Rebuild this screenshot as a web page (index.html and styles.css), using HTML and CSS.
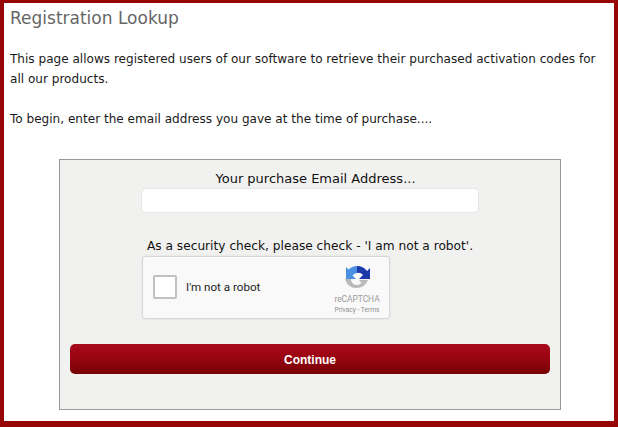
FILE: index.html
```html
<!DOCTYPE html>
<html lang="en">

<head>
    <meta charset="UTF-8">
    <title>Registration Lookup</title>
    <link rel="stylesheet" href="styles.css">
</head>

<body>
    <div class="page">
        <h1 class="title">Registration Lookup</h1>
        <p class="intro">This page allows registered users of our software to retrieve their purchased activation codes for all our products.</p>
        <p class="intro intro-last">To begin, enter the email address you gave at the time of purchase....</p>

        <form class="panel">
            <label class="label label-email" for="email">Your purchase Email Address...</label>
            <input class="email" id="email" type="text">
            <div class="label label-check">As a security check, please check - 'I am not a robot'.</div>
            <div class="captcha">
                <span class="captcha-box"></span>
                <span class="captcha-text">I'm not a robot</span>
                <div class="captcha-logo">
                    <svg class="captcha-icon" viewBox="0 0 26 26" width="26" height="26">
                        <path fill="#b9b9b9" d="M1 13 H7 A6 6 0 0 0 17.5 17 L15 14 H24 A12 12 0 0 1 1 13 Z"/>
                        <path fill="#4a90e2" d="M13 0 A13 13 0 0 0 4.5 3.5 L2 1 V13 H12 L8.5 9.5 A6 6 0 0 1 13 7 Z"/>
                        <path fill="#1c3aa9" d="M13 0 A13 13 0 0 1 23 5 L26 2 V13 H15 L19 9 A6 6 0 0 0 13 7 Z"/>
                    </svg>
                    <div class="captcha-name">reCAPTCHA</div>
                    <div class="captcha-links">Privacy - Terms</div>
                </div>
            </div>
            <button class="continue" type="button">Continue</button>
        </form>
    </div>
</body>

</html>
```

FILE: styles.css
```css
* {
    margin: 0;
    padding: 0;
    box-sizing: border-box;
}

html,
body {
    height: 100%;
}

body {
    font-family: "DejaVu Sans", Verdana, sans-serif;
    background-color: #fff;
}

.page {
    height: 427px;
    border-style: solid;
    border-color: #960606;
    border-width: 3px 4px 6px 4px;
    padding: 4px 6px 0 6px;
    color: #1a1a1a;
    overflow: hidden;
}

.title {
    font-size: 17px;
    font-weight: normal;
    line-height: 22px;
    color: #666;
    margin-bottom: 20px;
}

.intro {
    font-size: 12.07px;
    line-height: 20px;
    margin-bottom: 20px;
}

.intro-last {
    margin-bottom: 30px;
}

.panel {
    width: 502px;
    height: 251px;
    margin-left: 49px;
    padding-top: 10px;
    border: 1px solid #999;
    background-color: #f1f1f0;
    display: flex;
    flex-direction: column;
    align-items: center;
}

.label {
    font-size: 12.2px;
    line-height: 18px;
    color: #111;
}

.label-email {
    font-size: 13px;
    padding-left: 11px;
}

.email {
    width: 338px;
    height: 25px;
    border: 1px solid #e6e6e6;
    border-radius: 5px;
    background-color: #fff;
    outline: 0;
}

.label-check {
    margin-top: 24px;
}

.captcha {
    width: 248px;
    height: 63px;
    margin-top: 1px;
    align-self: flex-start;
    margin-left: 82px;
    border: 1px solid #d6d6d6;
    border-radius: 3px;
    background-color: #f9f9f9;
    box-shadow: 0 0 3px rgba(0, 0, 0, 0.08);
    display: flex;
    align-items: center;
    padding-left: 10px;
}

.captcha-box {
    width: 24px;
    height: 24px;
    margin-bottom: 2px;
    border: 2px solid #c1c1c1;
    border-radius: 2px;
    background-color: #fff;
}

.captcha-text {
    font-family: Roboto, "Liberation Sans", sans-serif;
    font-size: 11.6px;
    color: #222;
    margin-left: 9px;
    margin-bottom: 2px;
}

.captcha-logo {
    margin-left: auto;
    width: 58px;
    margin-right: 3px;
    margin-top: 7px;
    text-align: center;
    font-family: Roboto, "Liberation Sans", sans-serif;
    color: #909090;
}

.captcha-icon {
    display: block;
    margin: 0 auto 1px;
}

.captcha-name {
    font-size: 8.4px;
    line-height: 12px;
    color: #9b9b9b;
}

.captcha-links {
    font-size: 6.6px;
    line-height: 11px;
}

.continue {
    width: 480px;
    height: 30px;
    margin-top: 25px;
    padding-top: 2px;
    border: 0;
    border-radius: 5px;
    background: linear-gradient(#a80a1c, #9c0512 40%, #760303);
    color: #fff;
    font-family: "Liberation Sans", Arial, sans-serif;
    font-size: 12px;
    font-weight: bold;
}
```
